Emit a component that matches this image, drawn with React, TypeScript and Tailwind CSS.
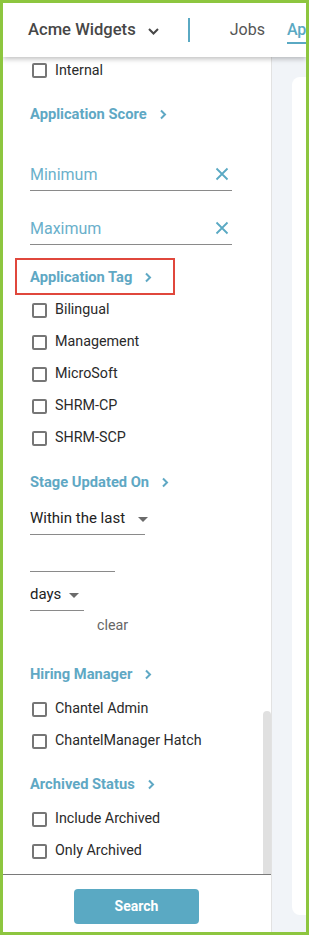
import React from "react";

const font = { fontFamily: "Roboto, 'Noto Sans', sans-serif" };

function Chevron({ className = "" }: { className?: string }) {
  return (
    <svg width="8" height="11" viewBox="0 0 8 11" className={className}>
      <path d="M2 1.5 L6 5.5 L2 9.5" fill="none" stroke="#5fa8c4" strokeWidth="2" />
    </svg>
  );
}

function Heading({ label, boxed = false }: { label: string; boxed?: boolean }) {
  return (
    <div className="relative h-8 flex items-center pl-[27px]">
      <span className="text-[14.7px] font-bold text-[#5fa8c4] whitespace-nowrap">{label}</span>
      <Chevron className="ml-[12px] mt-[1px]" />
      {boxed && (
        <div className="absolute left-[12px] top-[-3px] w-[160px] h-[37px] border-2 border-[#e0473c]" />
      )}
    </div>
  );
}

function Check({ label }: { label: string }) {
  return (
    <div className="h-8 flex items-center pl-[29px]">
      <div className="w-[15px] h-[15px] border-2 border-[#767676] rounded-[2px] bg-white" />
      <span className="ml-[8px] text-[14.3px] text-[#2a2a2a] whitespace-nowrap">{label}</span>
    </div>
  );
}

function XIcon() {
  return (
    <svg width="14" height="14" viewBox="0 0 14 14">
      <path d="M1.5 1.5 L12.5 12.5 M12.5 1.5 L1.5 12.5" stroke="#5aa9c3" strokeWidth="1.8" />
    </svg>
  );
}

function Caret() {
  return (
    <svg width="10" height="5" viewBox="0 0 10 5">
      <path d="M0 0 L10 0 L5 5 Z" fill="#6b6b6b" />
    </svg>
  );
}

function Field({ placeholder, mt }: { placeholder: string; mt: string }) {
  return (
    <div className={`${mt} ml-[27px] w-[202px] h-[33px] border-b border-[#8a8a8a] flex items-center justify-between pr-[3px]`}>
      <span className="text-[16px] text-[#6ab0cb] mt-[1px]">{placeholder}</span>
      <XIcon />
    </div>
  );
}

export default function App() {
  return (
    <div
      className="w-[309px] h-[935px] border-[3px] border-[#8dc63f] flex flex-col bg-white overflow-hidden"
      style={font}
    >
      {/* Header */}
      <div className="relative z-10 h-[54px] shrink-0 bg-white flex items-center shadow-[0_2px_5px_rgba(0,0,0,0.25)] whitespace-nowrap overflow-hidden">
        <span className="ml-[25px] text-[16.6px] font-medium text-[#474747]">Acme Widgets</span>
        <svg width="11" height="7" viewBox="0 0 11 7" className="ml-[12px] mt-[2px] shrink-0">
          <path d="M1 1 L5.5 5.5 L10 1" fill="none" stroke="#474747" strokeWidth="2" />
        </svg>
        <div className="ml-[29px] w-[2px] h-[24px] bg-[#5aa9c3] shrink-0" />
        <span className="ml-[40px] text-[16px] text-[#555]">Jobs</span>
        <div className="ml-[22px] relative h-full flex items-center">
          <span className="text-[16px] font-medium text-[#5aa9c3]">Ap</span>
          <div className="absolute left-0 top-[39px] w-[30px] h-[2px] bg-[#5aa9c3]" />
        </div>
      </div>

      {/* Body */}
      <div className="flex-1 flex min-h-0">
        {/* Sidebar */}
        <div className="w-[269px] shrink-0 flex flex-col border-r border-[#e2e2e2] bg-white">
          <div className="relative flex-1 min-h-0 overflow-hidden">
            <div className="h-[27px] flex items-center pl-[29px]">
              <div className="w-[15px] h-[15px] border-2 border-[#767676] rounded-[2px]" />
              <span className="ml-[8px] text-[14.3px] text-[#2a2a2a]">Internal</span>
            </div>
            <div className="mt-[14px]">
              <Heading label="Application Score" />
            </div>
            <Field placeholder="Minimum" mt="mt-[28px]" />
            <Field placeholder="Maximum" mt="mt-[21px]" />
            <div className="mt-[16px]">
              <Heading label="Application Tag" boxed />
            </div>
            <div className="mt-[1px]">
              <Check label="Bilingual" />
              <Check label="Management" />
              <Check label="MicroSoft" />
              <Check label="SHRM-CP" />
              <Check label="SHRM-SCP" />
            </div>
            <div className="mt-[12px]">
              <Heading label="Stage Updated On" />
            </div>
            <div className="mt-[5px] ml-[27px] w-[115px] h-[32px] border-b border-[#8a8a8a] flex items-center whitespace-nowrap">
              <span className="text-[15px] text-[#222]">Within the last</span>
              <span className="ml-[13px] mt-[1px] flex"><Caret /></span>
            </div>
            <div className="mt-[5px] ml-[27px] w-[85px] h-[32px] border-b border-[#8a8a8a]" />
            <div className="mt-[7px] ml-[27px] w-[54px] h-[32px] border-b border-[#8a8a8a] flex items-center">
              <span className="text-[15px] text-[#222]">days</span>
              <span className="ml-[8px] mt-[2px] flex"><Caret /></span>
            </div>
            <div className="mt-[5px] ml-[94px] h-[20px] flex items-center">
              <span className="text-[14.3px] text-[#666]">clear</span>
            </div>
            <div className="mt-[22px]">
              <Heading label="Hiring Manager" />
            </div>
            <div className="mt-[3px]">
              <Check label="Chantel Admin" />
              <Check label="ChantelManager Hatch" />
            </div>
            <div className="mt-[11px]">
              <Heading label="Archived Status" />
            </div>
            <div className="mt-[3px]">
              <Check label="Include Archived" />
              <Check label="Only Archived" />
            </div>
            {/* scrollbar */}
            <div className="absolute right-0 bottom-0 w-[8px] h-[163px] rounded-t-[4px] bg-[#e0e0e0]" />
          </div>
          <div className="h-[58px] shrink-0 border-t border-[#7a7a7a] flex justify-center items-start pt-[14px]">
            <button className="ml-[-1px] w-[125px] h-[35px] rounded-[4px] bg-[#5aa9c3] text-white text-[14px] font-bold">
              Search
            </button>
          </div>
        </div>
        {/* Main */}
        <div className="flex-1 bg-[#f1f4f8] pt-[20px] pl-[20px] pb-[17px]">
          <div className="h-full bg-white rounded-l-[8px]" />
        </div>
      </div>
    </div>
  );
}
